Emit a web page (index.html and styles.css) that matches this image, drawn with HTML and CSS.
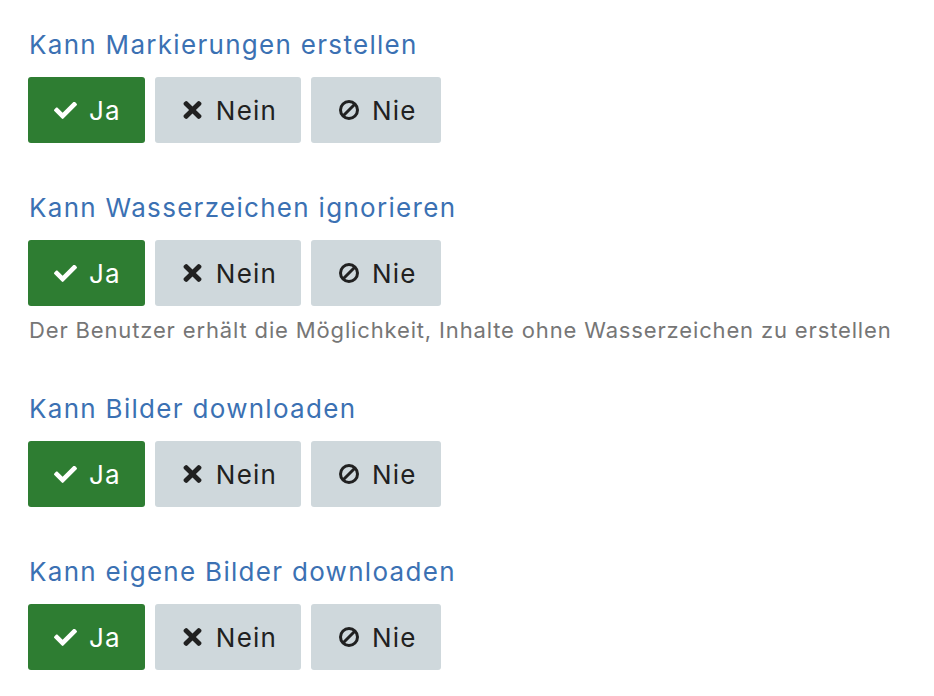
FILE: index.html
```html
<!DOCTYPE html>
<html lang="de">

<head>
    <meta charset="UTF-8">
    <meta name="viewport" content="width=device-width, initial-scale=1.0">
    <title>Berechtigungen</title>
    <link rel="stylesheet" href="styles.css">
</head>

<body>
    <main class="permissions">
        <!-- Each permission: label + three choice buttons -->
        <section class="permission">
            <h2 class="permission-title">Kann Markierungen erstellen</h2>
            <div class="choices">
                <button class="choice choice-yes">
                    <span class="icon-wrap"><svg class="icon icon-check" viewBox="0 72 512 376"><path d="M173.9 439.4 7.5 273c-10-10-10-26.2 0-36.2l36.2-36.2c10-10 26.2-10 36.2 0L192 312.7 432.1 72.6c10-10 26.2-10 36.2 0l36.2 36.2c10 10 10 26.2 0 36.2L210.1 439.4c-10 10-26.2 10-36.2 0z"/></svg></span>
                    <span>Ja</span>
                </button>
                <button class="choice">
                    <span class="icon-wrap"><svg class="icon icon-times" viewBox="0 80 352 352"><path d="m242.7 256 100.1-100.1c12.3-12.3 12.3-32.2 0-44.5l-22.2-22.2c-12.3-12.3-32.2-12.3-44.5 0L176 189.3 75.9 89.2c-12.3-12.3-32.2-12.3-44.5 0L9.2 111.4c-12.3 12.3-12.3 32.2 0 44.5L109.3 256 9.2 356.1c-12.3 12.3-12.3 32.2 0 44.5l22.2 22.2c12.3 12.3 32.2 12.3 44.5 0L176 322.7l100.1 100.1c12.3 12.3 32.2 12.3 44.5 0l22.2-22.2c12.3-12.3 12.3-32.2 0-44.5L242.7 256z"/></svg></span>
                    <span>Nein</span>
                </button>
                <button class="choice">
                    <span class="icon-wrap"><svg class="icon icon-ban" viewBox="0 0 20 20"><circle cx="10" cy="10" r="8.5" fill="none" stroke="currentColor" stroke-width="3"/><path d="M4.5 15.5 15.5 4.5" stroke="currentColor" stroke-width="3"/></svg></span>
                    <span>Nie</span>
                </button>
            </div>
        </section>

        <section class="permission">
            <h2 class="permission-title">Kann Wasserzeichen ignorieren</h2>
            <div class="choices">
                <button class="choice choice-yes">
                    <span class="icon-wrap"><svg class="icon icon-check" viewBox="0 72 512 376"><path d="M173.9 439.4 7.5 273c-10-10-10-26.2 0-36.2l36.2-36.2c10-10 26.2-10 36.2 0L192 312.7 432.1 72.6c10-10 26.2-10 36.2 0l36.2 36.2c10 10 10 26.2 0 36.2L210.1 439.4c-10 10-26.2 10-36.2 0z"/></svg></span>
                    <span>Ja</span>
                </button>
                <button class="choice">
                    <span class="icon-wrap"><svg class="icon icon-times" viewBox="0 80 352 352"><path d="m242.7 256 100.1-100.1c12.3-12.3 12.3-32.2 0-44.5l-22.2-22.2c-12.3-12.3-32.2-12.3-44.5 0L176 189.3 75.9 89.2c-12.3-12.3-32.2-12.3-44.5 0L9.2 111.4c-12.3 12.3-12.3 32.2 0 44.5L109.3 256 9.2 356.1c-12.3 12.3-12.3 32.2 0 44.5l22.2 22.2c12.3 12.3 32.2 12.3 44.5 0L176 322.7l100.1 100.1c12.3 12.3 32.2 12.3 44.5 0l22.2-22.2c12.3-12.3 12.3-32.2 0-44.5L242.7 256z"/></svg></span>
                    <span>Nein</span>
                </button>
                <button class="choice">
                    <span class="icon-wrap"><svg class="icon icon-ban" viewBox="0 0 20 20"><circle cx="10" cy="10" r="8.5" fill="none" stroke="currentColor" stroke-width="3"/><path d="M4.5 15.5 15.5 4.5" stroke="currentColor" stroke-width="3"/></svg></span>
                    <span>Nie</span>
                </button>
            </div>
            <p class="permission-help">Der Benutzer erhält die Möglichkeit, Inhalte ohne Wasserzeichen zu erstellen</p>
        </section>

        <section class="permission">
            <h2 class="permission-title">Kann Bilder downloaden</h2>
            <div class="choices">
                <button class="choice choice-yes">
                    <span class="icon-wrap"><svg class="icon icon-check" viewBox="0 72 512 376"><path d="M173.9 439.4 7.5 273c-10-10-10-26.2 0-36.2l36.2-36.2c10-10 26.2-10 36.2 0L192 312.7 432.1 72.6c10-10 26.2-10 36.2 0l36.2 36.2c10 10 10 26.2 0 36.2L210.1 439.4c-10 10-26.2 10-36.2 0z"/></svg></span>
                    <span>Ja</span>
                </button>
                <button class="choice">
                    <span class="icon-wrap"><svg class="icon icon-times" viewBox="0 80 352 352"><path d="m242.7 256 100.1-100.1c12.3-12.3 12.3-32.2 0-44.5l-22.2-22.2c-12.3-12.3-32.2-12.3-44.5 0L176 189.3 75.9 89.2c-12.3-12.3-32.2-12.3-44.5 0L9.2 111.4c-12.3 12.3-12.3 32.2 0 44.5L109.3 256 9.2 356.1c-12.3 12.3-12.3 32.2 0 44.5l22.2 22.2c12.3 12.3 32.2 12.3 44.5 0L176 322.7l100.1 100.1c12.3 12.3 32.2 12.3 44.5 0l22.2-22.2c12.3-12.3 12.3-32.2 0-44.5L242.7 256z"/></svg></span>
                    <span>Nein</span>
                </button>
                <button class="choice">
                    <span class="icon-wrap"><svg class="icon icon-ban" viewBox="0 0 20 20"><circle cx="10" cy="10" r="8.5" fill="none" stroke="currentColor" stroke-width="3"/><path d="M4.5 15.5 15.5 4.5" stroke="currentColor" stroke-width="3"/></svg></span>
                    <span>Nie</span>
                </button>
            </div>
        </section>

        <section class="permission">
            <h2 class="permission-title">Kann eigene Bilder downloaden</h2>
            <div class="choices">
                <button class="choice choice-yes">
                    <span class="icon-wrap"><svg class="icon icon-check" viewBox="0 72 512 376"><path d="M173.9 439.4 7.5 273c-10-10-10-26.2 0-36.2l36.2-36.2c10-10 26.2-10 36.2 0L192 312.7 432.1 72.6c10-10 26.2-10 36.2 0l36.2 36.2c10 10 10 26.2 0 36.2L210.1 439.4c-10 10-26.2 10-36.2 0z"/></svg></span>
                    <span>Ja</span>
                </button>
                <button class="choice">
                    <span class="icon-wrap"><svg class="icon icon-times" viewBox="0 80 352 352"><path d="m242.7 256 100.1-100.1c12.3-12.3 12.3-32.2 0-44.5l-22.2-22.2c-12.3-12.3-32.2-12.3-44.5 0L176 189.3 75.9 89.2c-12.3-12.3-32.2-12.3-44.5 0L9.2 111.4c-12.3 12.3-12.3 32.2 0 44.5L109.3 256 9.2 356.1c-12.3 12.3-12.3 32.2 0 44.5l22.2 22.2c12.3 12.3 32.2 12.3 44.5 0L176 322.7l100.1 100.1c12.3 12.3 32.2 12.3 44.5 0l22.2-22.2c12.3-12.3 12.3-32.2 0-44.5L242.7 256z"/></svg></span>
                    <span>Nein</span>
                </button>
                <button class="choice">
                    <span class="icon-wrap"><svg class="icon icon-ban" viewBox="0 0 20 20"><circle cx="10" cy="10" r="8.5" fill="none" stroke="currentColor" stroke-width="3"/><path d="M4.5 15.5 15.5 4.5" stroke="currentColor" stroke-width="3"/></svg></span>
                    <span>Nie</span>
                </button>
            </div>
        </section>
    </main>
</body>

</html>
```

FILE: styles.css
```css
/* General styles */
* {
    margin: 0;
    padding: 0;
    box-sizing: border-box;
}

body {
    font-family: 'Inter', 'Liberation Sans', sans-serif;
    background-color: #fff;
    color: #212121;
}

.permissions {
    padding: 29px 28px 0;
}

/* Permission block */
.permission {
    margin-bottom: 49px;
}

.permission-title {
    font-size: 26px;
    font-weight: 400;
    line-height: 32px;
    letter-spacing: 1.3px;
    color: #3b71b3;
    margin-bottom: 16px;
    padding-left: 1px;
}

.choices {
    display: flex;
    gap: 10px;
}

.choice {
    display: flex;
    align-items: center;
    gap: 10px;
    height: 66px;
    padding: 0 24px;
    border: none;
    border-radius: 3px;
    background-color: #cfd8dc;
    color: #212121;
    font-family: inherit;
    font-size: 26px;
    letter-spacing: 1.2px;
    cursor: pointer;
}

.choice-yes {
    background-color: #2e7d32;
    color: #fff;
}

.icon-wrap {
    display: flex;
    justify-content: center;
    align-items: center;
    width: 27px;
}

.icon {
    fill: currentColor;
}

.icon-check {
    width: 23px;
    height: 17px;
}

.icon-times {
    width: 19px;
    height: 18px;
}

.icon-ban {
    width: 20px;
    height: 20px;
}

.permission-help {
    font-size: 22px;
    line-height: 26px;
    letter-spacing: 0.85px;
    color: #767676;
    margin-top: 11px;
    margin-bottom: -37px;
    padding-bottom: 38px;
    padding-left: 1px;
}
```
